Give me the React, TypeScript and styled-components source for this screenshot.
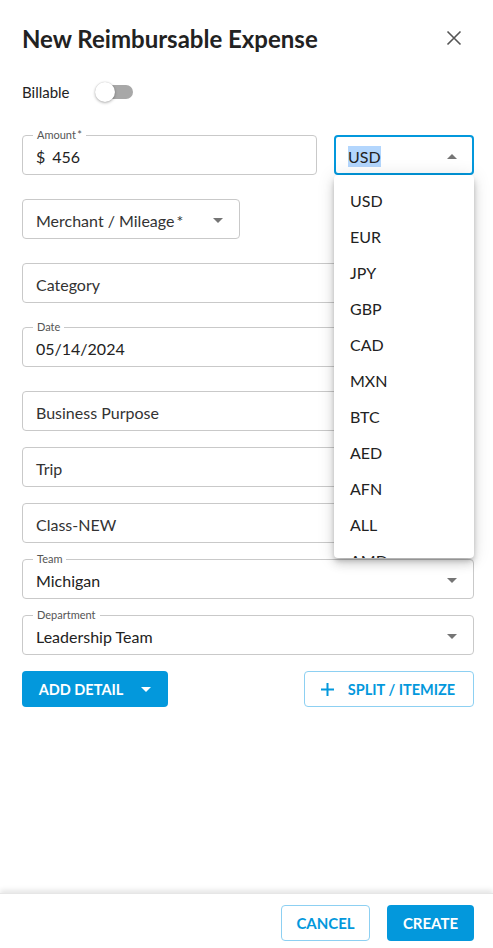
import * as React from 'react'
import styled, {createGlobalStyle} from 'styled-components'

const BLUE = '#0398dc'

const GlobalStyle = createGlobalStyle`
  html, body {
    margin: 0;
    padding: 0;
    background: #fff;
    font-family: Lato, "Open Sans", sans-serif;
    color: #222;
  }
  * { box-sizing: border-box; }
`

const Dialog = styled.div`
  width: 493px;
  height: 948px;
  display: flex;
  flex-direction: column;
  background: #fff;
`

const Body = styled.div`
  flex: 1;
  padding: 0 19px 0 22px;
  display: flex;
  flex-direction: column;
  align-items: stretch;
`

const Header = styled.div`
  display: flex;
  align-items: center;
  justify-content: space-between;
  height: 76px;
`

const Title = styled.h1`
  margin: 0;
  font-size: 24px;
  font-weight: 700;
  color: #222;
`

const CloseButton = styled.button`
  border: 0;
  background: none;
  padding: 0;
  margin-right: 12px;
  width: 16px;
  height: 16px;
  display: flex;
  cursor: pointer;
`

const BillableRow = styled.div`
  display: flex;
  align-items: center;
  gap: 26px;
  height: 32px;
  margin-bottom: 27px;
  font-size: 15px;
`

const Switch = styled.div`
  position: relative;
  width: 37px;
  height: 14px;
  border-radius: 7px;
  background: #a8a8a8;
`

const Thumb = styled.span`
  position: absolute;
  left: -1px;
  top: -3px;
  width: 20px;
  height: 20px;
  border-radius: 50%;
  background: #fff;
  box-shadow: 0 1px 3px rgba(0, 0, 0, 0.3), 0 0 1px rgba(0, 0, 0, 0.2);
`

const Row = styled.div`
  display: flex;
  gap: 17px;
`

const Field = styled.div<{$width?: number; $grow?: boolean; $gap?: number; $focused?: boolean}>`
  position: relative;
  width: ${p => (p.$width ? `${p.$width}px` : '100%')};
  flex: ${p => (p.$grow ? '1 1 0' : 'none')};
  height: 40px;
  margin-bottom: ${p => p.$gap ?? 24}px;
  border: ${p => (p.$focused ? `2px solid ${BLUE}` : '1px solid #c9c9c9')};
  border-radius: 4px;
  display: flex;
  align-items: center;
  padding: ${p => (p.$focused ? '2px 15px 0 12px' : '2px 16px 0 13px')};
  font-size: 16px;
  color: #222;
`

const Legend = styled.span`
  position: absolute;
  left: 10px;
  top: -8px;
  padding: 0 4px;
  background: #fff;
  font-size: 11px;
  color: #555;
  line-height: 14px;
`

const Placeholder = styled.span`
  color: #333;
`

const Value = styled.span`
  flex: 1;
  white-space: nowrap;
`

const Selected = styled.span`
  background: #b3d6fd;
  padding: 1px 0;
`

const Prefix = styled.span`
  margin-right: 7px;
`

const Arrow = styled.span<{$up?: boolean}>`
  width: 0;
  height: 0;
  border-left: 5px solid transparent;
  border-right: 5px solid transparent;
  ${p =>
    p.$up ? 'border-bottom: 5px solid #757575;' : 'border-top: 5px solid #757575;'}
  margin-left: auto;
`

const CurrencyWrap = styled.div`
  position: relative;
  width: 140px;
  flex: none;
`

const Menu = styled.ul`
  position: absolute;
  top: 40px;
  left: 0;
  width: 140px;
  height: 383px;
  overflow: hidden;
  margin: 0;
  padding: 7px 0 0;
  list-style: none;
  background: #fff;
  border-radius: 4px;
  box-shadow: 0 3px 5px -1px rgba(0, 0, 0, 0.2), 0 6px 10px 0 rgba(0, 0, 0, 0.14),
    0 1px 18px 0 rgba(0, 0, 0, 0.12);
  z-index: 10;
`

const MenuItem = styled.li`
  height: 36px;
  display: flex;
  align-items: center;
  padding-left: 16px;
  font-size: 16px;
  color: #222;
`

const ButtonRow = styled.div`
  display: flex;
  justify-content: space-between;
`

const Button = styled.button<{$variant: 'filled' | 'outlined'}>`
  height: 36px;
  border-radius: 4px;
  font-family: Lato, sans-serif;
  font-weight: 700;
  font-size: 14.5px;
  text-transform: uppercase;
  display: flex;
  align-items: center;
  justify-content: center;
  cursor: pointer;
  ${p =>
    p.$variant === 'filled'
      ? `background: ${BLUE}; color: #fff; border: 0;`
      : `background: #fff; color: ${BLUE}; border: 1px solid #8dd0f2;`}
`

const AddDetail = styled(Button)`
  width: 146px;
  padding: 0;
  gap: 18px;
`

const WhiteArrow = styled.span`
  width: 0;
  height: 0;
  border-left: 5px solid transparent;
  border-right: 5px solid transparent;
  border-top: 5px solid #fff;
`

const SplitButton = styled(Button)`
  width: 170px;
  gap: 14px;
  padding-left: 4px;
`

const Footer = styled.div`
  display: flex;
  justify-content: flex-end;
  gap: 17px;
  padding: 11px 19px 7px 0;
  box-shadow: 0 -3px 5px rgba(0, 0, 0, 0.1);
  border-top: 1px solid #e6e6e6;
`

const CancelButton = styled(Button)`
  width: 89px;
  font-size: 15px;
`

const CreateButton = styled(Button)`
  width: 87px;
  font-size: 15px;
`

const currencies = ['USD', 'EUR', 'JPY', 'GBP', 'CAD', 'MXN', 'BTC', 'AED', 'AFN', 'ALL', 'AMD']

export default function App() {
  return (
    <Dialog>
      <GlobalStyle />
      <Body>
        <Header>
          <Title>New Reimbursable Expense</Title>
          <CloseButton aria-label="close">
            <svg width="16" height="16" viewBox="0 0 16 16">
              <path d="M1.5 1.5 L14.5 14.5 M14.5 1.5 L1.5 14.5" stroke="#555" strokeWidth="1.6" />
            </svg>
          </CloseButton>
        </Header>

        <BillableRow>
          <span>Billable</span>
          <Switch>
            <Thumb />
          </Switch>
        </BillableRow>

        <Row>
          <Field $grow>
            <Legend>Amount{'\u2009'}*</Legend>
            <Prefix>$</Prefix>
            <Value>456</Value>
          </Field>
          <CurrencyWrap>
            <Field $width={140} $focused>
              <Value><Selected>USD</Selected></Value>
              <Arrow $up />
            </Field>
            <Menu>
              {currencies.map(c => (
                <MenuItem key={c}>{c}</MenuItem>
              ))}
            </Menu>
          </CurrencyWrap>
        </Row>

        <Field $width={218}>
          <Placeholder>Merchant / Mileage{'\u2009'}*</Placeholder>
          <Arrow />
        </Field>

        <Field>
          <Placeholder>Category</Placeholder>
        </Field>

        <Field>
          <Legend>Date</Legend>
          <Value>05/14/2024</Value>
        </Field>

        <Field $gap={16}>
          <Placeholder>Business Purpose</Placeholder>
        </Field>

        <Field $gap={16}>
          <Placeholder>Trip</Placeholder>
        </Field>

        <Field $gap={16}>
          <Placeholder>Class-NEW</Placeholder>
        </Field>

        <Field $gap={16}>
          <Legend>Team</Legend>
          <Value>Michigan</Value>
          <Arrow />
        </Field>

        <Field $gap={16}>
          <Legend>Department</Legend>
          <Value>Leadership Team</Value>
          <Arrow />
        </Field>

        <ButtonRow>
          <AddDetail $variant="filled">
            Add Detail
            <WhiteArrow />
          </AddDetail>
          <SplitButton $variant="outlined">
            <svg width="13" height="13" viewBox="0 0 13 13">
              <path d="M6.5 0 V13 M0 6.5 H13" stroke={BLUE} strokeWidth="2" />
            </svg>
            Split / Itemize
          </SplitButton>
        </ButtonRow>
      </Body>
      <Footer>
        <CancelButton $variant="outlined">Cancel</CancelButton>
        <CreateButton $variant="filled">Create</CreateButton>
      </Footer>
    </Dialog>
  )
}
